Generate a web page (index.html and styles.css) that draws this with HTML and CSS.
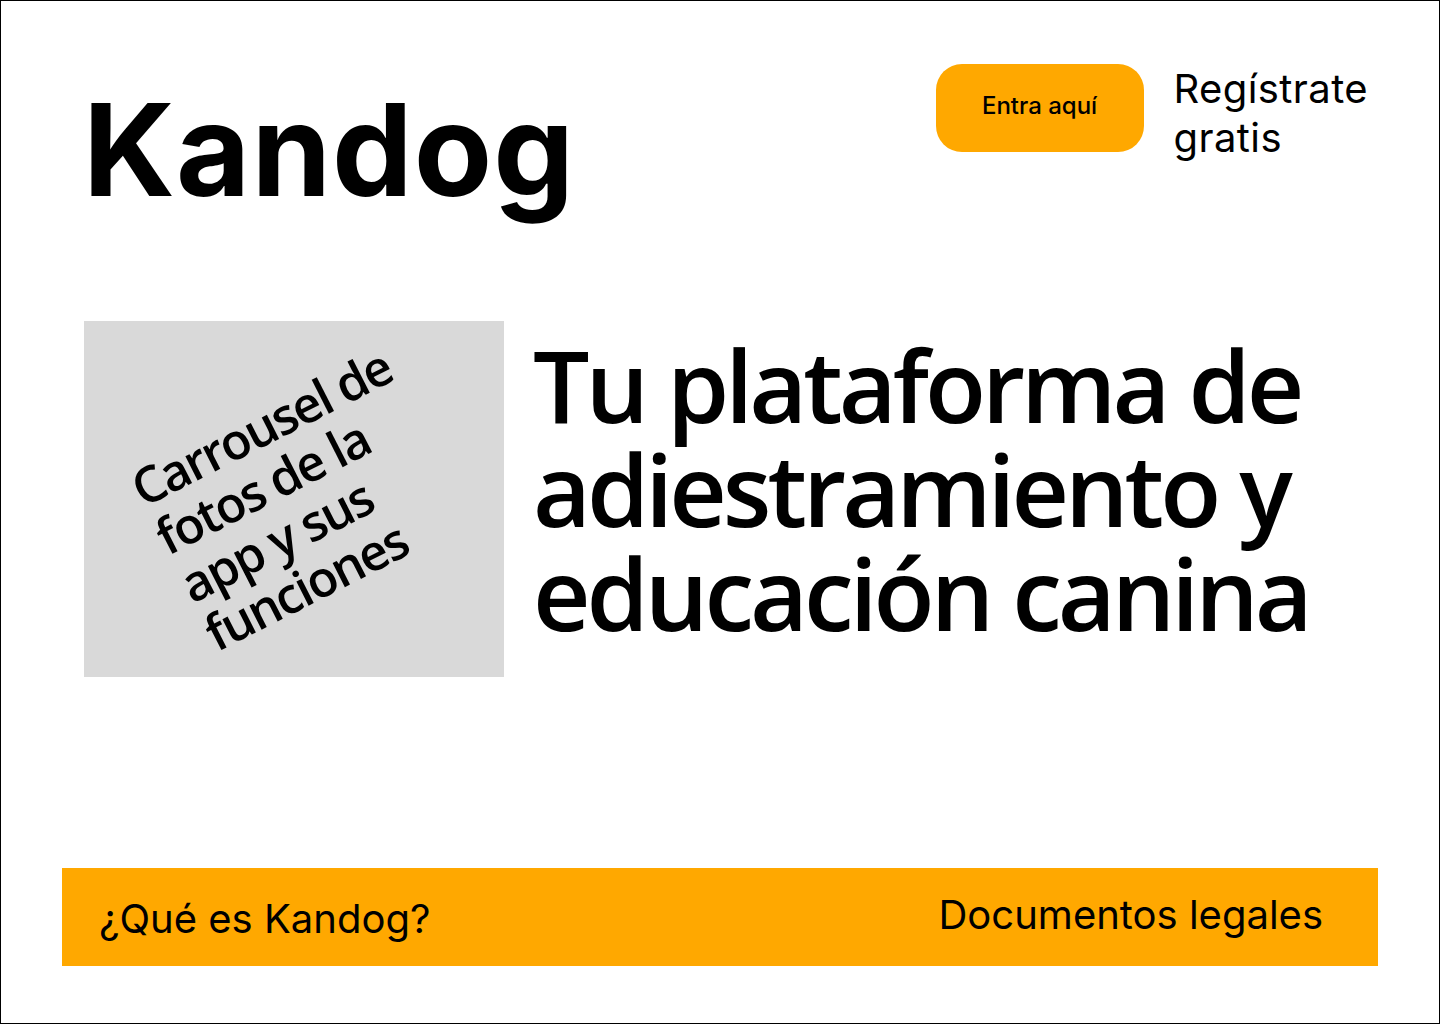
FILE: index.html
```html
<!DOCTYPE html>
<html lang="es">
<head>
<meta charset="utf-8">
<title>Kandog</title>
<link rel="stylesheet" href="styles.css">
</head>
<body>
<div class="frame">
  <header class="header">
    <div class="logo">Kandog</div>
    <div class="actions">
      <a class="btn-login" href="#">Entra aquí</a>
      <a class="register" href="#">Regístrate<br>gratis</a>
    </div>
  </header>
  <main class="hero">
    <div class="carousel">
      <p class="carousel-text">Carrousel de<br>fotos de la<br>app y sus<br>funciones</p>
    </div>
    <h1 class="headline">Tu plataforma de<br>adiestramiento y<br>educación canina</h1>
  </main>
  <footer class="footer">
    <a class="footer-link footer-link-left" href="#">¿Qué es Kandog?</a>
    <a class="footer-link footer-link-right" href="#">Documentos legales</a>
  </footer>
</div>
</body>
</html>
```

FILE: styles.css
```css
* { box-sizing: border-box; }
html, body { margin: 0; padding: 0; background: #fff; }
body { font-family: Inter, "Liberation Sans", sans-serif; color: #000; }
a { color: inherit; text-decoration: none; }

.frame {
  width: 1440px;
  height: 1024px;
  border: 1px solid #000;
  display: flex;
  flex-direction: column;
  overflow: hidden;
}

.header {
  display: flex;
  justify-content: space-between;
  align-items: flex-start;
  padding: 63px 71px 0 82px;
}

.logo {
  font-family: Inter, sans-serif;
  font-weight: 700;
  font-size: 128px;
  line-height: normal;
  letter-spacing: 1px;
  margin-top: 8px;
}

.actions {
  display: flex;
  align-items: flex-start;
  gap: 30px;
}

.btn-login {
  width: 208px;
  height: 88px;
  border-radius: 26px;
  background: #FFA800;
  display: flex;
  align-items: center;
  justify-content: center;
  padding-bottom: 6px;
  font-size: 24px;
  font-weight: 500;
}

.register {
  font-size: 40px;
  line-height: normal;
  letter-spacing: 0.4px;
}

.hero {
  display: flex;
  align-items: flex-start;
  padding-left: 83px;
  margin-top: 94px;
}

.carousel {
  width: 420px;
  height: 356px;
  flex: none;
  background: #D9D9D9;
  display: flex;
  align-items: center;
  justify-content: center;
}

.carousel-text {
  margin: 0;
  font-family: "Open Sans", "Noto Sans", sans-serif;
  font-weight: 600;
  font-size: 50px;
  line-height: 54px;
  letter-spacing: -1.9px;
  text-align: left;
  transform: translateX(4px) rotate(-27deg);
}

.headline {
  margin: 11px 0 0 29px;
  font-family: "Open Sans", "Noto Sans", sans-serif;
  font-weight: 600;
  font-size: 100px;
  line-height: 104px;
  letter-spacing: -4px;
}

.footer {
  margin: auto 61px 57px;
  height: 98px;
  background: #FFA800;
  display: flex;
  justify-content: space-between;
  align-items: center;
  padding: 0 55px 0 37px;
}

.footer-link {
  font-size: 40px;
  line-height: normal;
}

.footer-link-left { margin-top: 3px; }
.footer-link-right { margin-bottom: 5px; }
```
